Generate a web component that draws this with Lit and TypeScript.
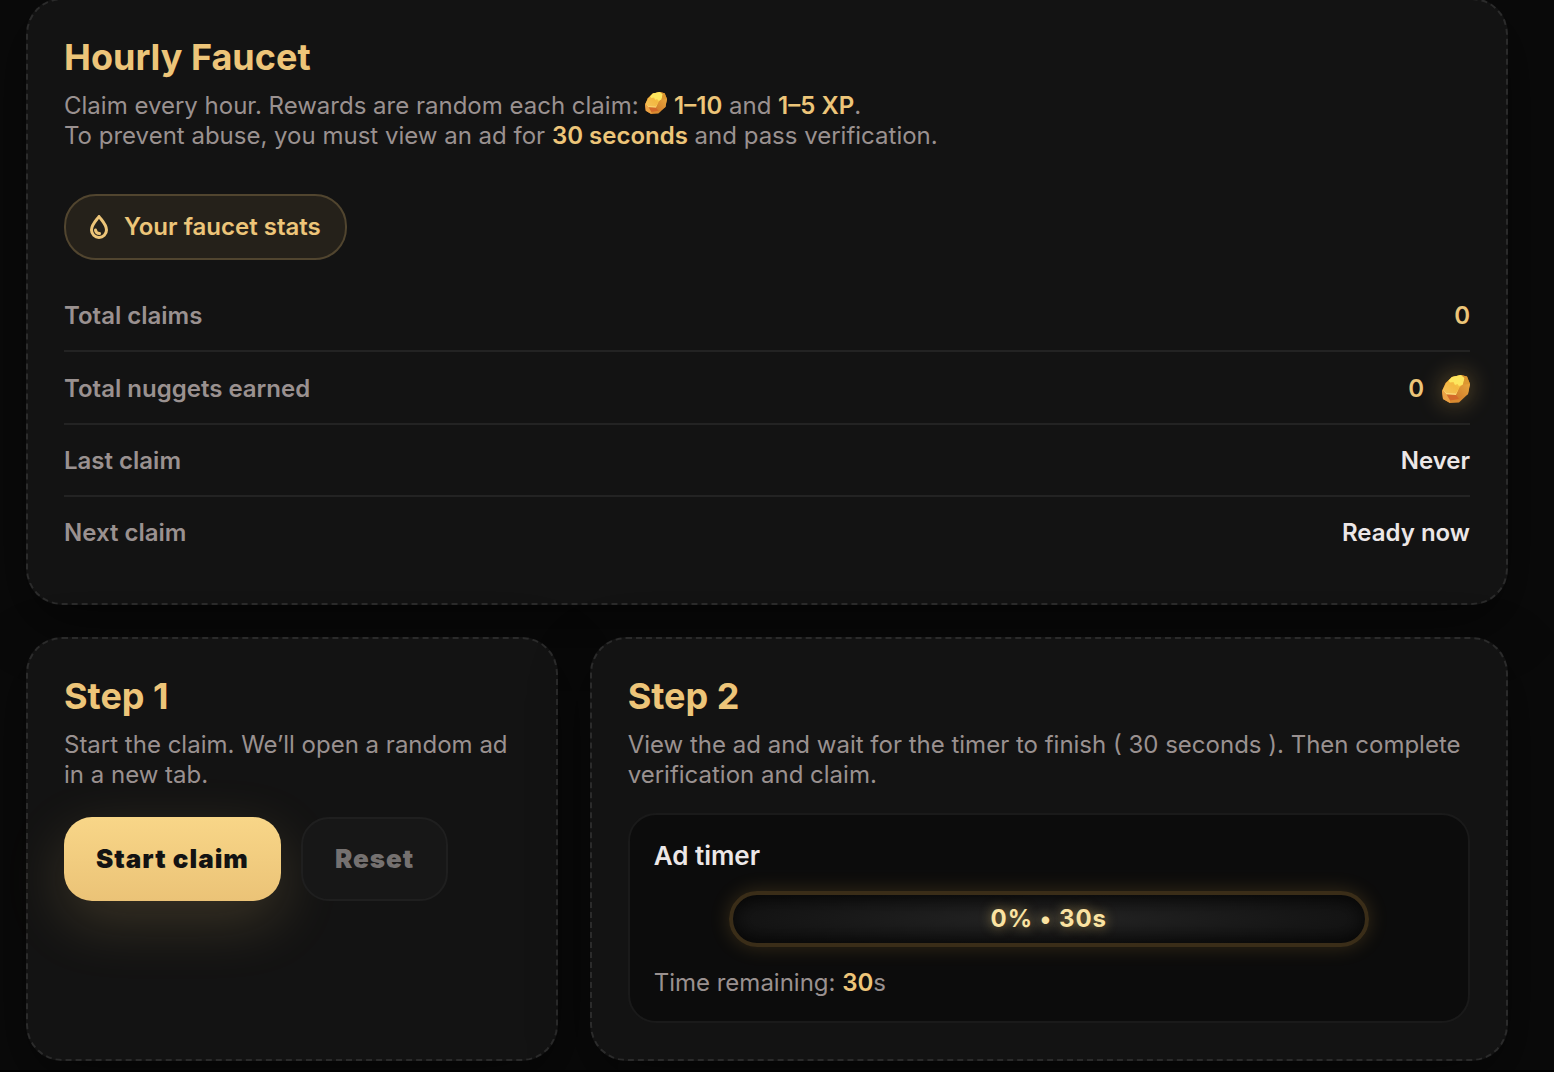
import { LitElement, html, css, svg } from "lit";
import { customElement, property, state } from "lit/decorators.js";

@customElement("gold-nugget")
class GoldNugget extends LitElement {
  static styles = css`
    :host {
      display: inline-block;
      width: 1em;
      height: 1em;
    }
    svg {
      display: block;
      width: 100%;
      height: 100%;
    }
  `;

  render() {
    return html`
      <svg viewBox="0 0 28 28" aria-hidden="true">
        <defs>
          <linearGradient id="face" x1="0" y1="1" x2="1" y2="0">
            <stop offset="0" stop-color="#f6c25c" />
            <stop offset="0.5" stop-color="#f3b840" />
            <stop offset="1" stop-color="#fde25a" />
          </linearGradient>
          <linearGradient id="flank" x1="0" y1="1" x2="1" y2="0">
            <stop offset="0" stop-color="#cf7a2a" />
            <stop offset="1" stop-color="#e8a63c" />
          </linearGradient>
        </defs>
        <path d="M19 0 25 1.500 28 9 26 19 17 27.500 8 28 1 24 0 16 3.500 8 10 2Z" fill="#d98a30" />
        <path d="M19 0 22.500 3 21 9.500 18 12 14 20 4.500 19.500 0.500 15 4 8 10 2Z" fill="url(#face)" />
        <path d="M19 0 22.500 3 21 9.500 17 11 15.500 9 13 10 11.500 7 8 7.500 6.500 5.500 10 2Z" fill="#fde65e" />
        <path d="M4.500 18 14 18.500 16.500 14 14 20 4.500 19.500 0.500 15Z" fill="#fbd978" />
        <path d="M19 0 25 1.500 28 9 21 9.500 22.500 3Z" fill="#dc9730" />
        <path d="M21 9.500 28 9 26 19 17 25 14 20 18 12Z" fill="url(#flank)" />
        <path d="M4.500 19.500 14 20 17 24 8 25.500Z" fill="#d4692a" />
        <path d="M0.500 15 4.500 19.500 8 25.500 8 28 1 24 0 16Z" fill="#eca245" />
      </svg>
    `;
  }
}

@customElement("faucet-card")
class FaucetCard extends LitElement {
  @property() heading = "";

  static styles = css`
    :host {
      display: block;
      box-sizing: border-box;
      padding: 36px;
      border: 2px dashed #2b2b2b;
      border-radius: 36px;
      background: #131313;
      box-shadow: 0 20px 60px rgba(0, 0, 0, 0.45);
    }
    h2 {
      margin: 0 0 13px;
      font-size: 36px;
      line-height: 42px;
      font-weight: 700;
      color: #edc579;
    }
  `;

  render() {
    return html`<h2>${this.heading}</h2><slot></slot>`;
  }
}

@customElement("app-root")
class AppRoot extends LitElement {
  @state() private duration = 30;
  @state() private remaining = 30;

  static styles = css`
    :host {
      display: block;
      box-sizing: border-box;
      min-height: 100vh;
      padding: 0 46px 9px 26px;
      border-bottom: 2px solid #000;
      overflow: hidden;
      background: #0a0a0a;
      color: #9a9190;
      font-family: Inter, "Liberation Sans", sans-serif;
      font-size: 24px;
      line-height: 30px;
    }
    .page {
      display: grid;
      grid-template-columns: 11fr 19fr;
      gap: 32px;
      margin-top: -2px;
    }
    .overview {
      grid-column: 1 / -1;
    }
    p {
      margin: 0;
    }
    p gold-nugget {
      font-size: 22px;
    }
    strong {
      font-weight: 600;
      color: #edc579;
    }
    .badge {
      display: inline-flex;
      align-items: center;
      gap: 16px;
      box-sizing: border-box;
      height: 66px;
      margin-top: 43px;
      padding: 0 24px;
      border: 2px solid #51452f;
      border-radius: 32px;
      background: #25211a;
      color: #edc579;
      font-weight: 600;
    }
    .badge svg {
      width: 18px;
      height: 24px;
    }
    dl {
      margin: 20px 0 0;
    }
    .row {
      display: flex;
      justify-content: space-between;
      align-items: center;
      padding: 21px 0 19px;
      border-bottom: 2px solid #232323;
      font-weight: 600;
    }
    .row:last-child {
      border-bottom: 0;
    }
    dd {
      display: flex;
      align-items: center;
      gap: 18px;
      margin: 0;
      color: #ece7e7;
    }
    .gold {
      color: #edc579;
    }
    .glow {
      margin: 2px 0 1px;
      font-size: 28px;
      filter: drop-shadow(0 0 12px rgba(237, 187, 90, 0.4));
    }
    .actions {
      display: flex;
      gap: 20px;
      margin-top: 27px;
    }
    button {
      box-sizing: border-box;
      height: 84px;
      padding: 0 32px;
      border: 0;
      border-radius: 28px;
      font: inherit;
      font-size: 26px;
      font-weight: 900;
      letter-spacing: 1px;
    }
    .primary {
      background: linear-gradient(#f8d688, #ebc377);
      color: #131313;
      box-shadow: 0 20px 60px rgba(237, 197, 121, 0.18);
    }
    .ghost {
      border: 2px solid #1f1f1f;
      background: #171717;
      color: #757170;
    }
    .timer {
      margin-top: 23px;
      padding: 24px 24px 23px;
      border: 2px solid #1a1a1a;
      border-radius: 28px;
      background: #0c0c0c;
    }
    h3 {
      margin: 0;
      font-size: 26px;
      line-height: 34px;
      font-weight: 600;
      color: #ece7e7;
    }
    .meter {
      display: grid;
      place-items: center;
      box-sizing: border-box;
      width: 81%;
      height: 56px;
      margin: 18px auto 21px;
      border: 4px solid #3a2d18;
      border-radius: 28px;
      background: radial-gradient(ellipse at center, #252525, #0f0f0f 90%);
      box-shadow: 0 0 20px rgba(237, 180, 70, 0.18), inset 0 0 20px rgba(0, 0, 0, 0.7);
      color: #fbe3a2;
      font-weight: 700;
      letter-spacing: 1px;
      text-shadow: 0 0 12px rgba(237, 197, 100, 0.6);
    }
  `;

  private drop = svg`
    <path d="M9 1.500C6.500 5 1.500 9.500 1.500 15a7.500 7.500 0 0 0 15 0C16.500 9.500 11.500 5 9 1.500Z" />
    <path d="M5.500 15a4 4 0 0 0 4 3.500" />
  `;

  render() {
    const percent = Math.round((1 - this.remaining / this.duration) * 100);
    const instructions = `View the ad and wait for the timer to finish ( ${this.duration} seconds ). Then complete verification and claim.`;
    return html`
      <main class="page">
        <faucet-card class="overview" heading="Hourly Faucet">
          <p>
            Claim every hour. Rewards are random each claim:
            <gold-nugget></gold-nugget> <strong>1–10</strong> and <strong>1–5 XP</strong>.<br />
            To prevent abuse, you must view an ad for <strong>${this.duration} seconds</strong> and pass verification.
          </p>
          <div class="badge">
            <svg viewBox="0 0 18 24" fill="none" stroke="currentColor" stroke-width="3" stroke-linecap="round" stroke-linejoin="round" aria-hidden="true">${this.drop}</svg>
            Your faucet stats
          </div>
          <dl>
            <div class="row"><dt>Total claims</dt><dd class="gold">0</dd></div>
            <div class="row"><dt>Total nuggets earned</dt><dd class="gold">0 <gold-nugget class="glow"></gold-nugget></dd></div>
            <div class="row"><dt>Last claim</dt><dd>Never</dd></div>
            <div class="row"><dt>Next claim</dt><dd>Ready now</dd></div>
          </dl>
        </faucet-card>

        <faucet-card heading="Step 1">
          <p>Start the claim. We’ll open a random ad in a new tab.</p>
          <div class="actions">
            <button class="primary" type="button">Start claim</button>
            <button class="ghost" type="button" disabled>Reset</button>
          </div>
        </faucet-card>

        <faucet-card heading="Step 2">
          <p>${instructions}</p>
          <section class="timer">
            <h3>Ad timer</h3>
            <div class="meter">${`${percent}% • ${this.remaining}s`}</div>
            <p>Time remaining: <strong>${this.remaining}</strong>s</p>
          </section>
        </faucet-card>
      </main>
    `;
  }
}
